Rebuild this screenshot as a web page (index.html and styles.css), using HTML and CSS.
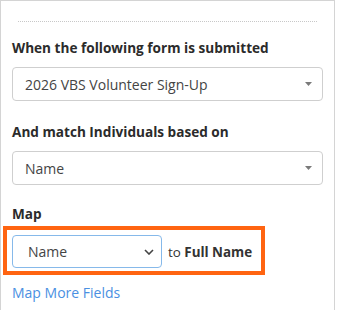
FILE: index.html
```html
<!DOCTYPE html>
<html>
<head>
    <title>Form Sync</title>
    <link rel="stylesheet" href="styles.css">
</head>
<body>
    <div class="panel">
        <hr class="divider">

        <div class="field-label first">When the following form is submitted</div>
        <div class="picker">
            <span>2026 VBS Volunteer Sign-Up</span>
            <svg class="caret" width="7" height="4" viewBox="0 0 7 4"><path d="M0 0h7L3.5 4z" fill="#7a7a7a"/></svg>
        </div>

        <div class="field-label">And match Individuals based on</div>
        <div class="picker">
            <span>Name</span>
            <svg class="caret" width="7" height="4" viewBox="0 0 7 4"><path d="M0 0h7L3.5 4z" fill="#7a7a7a"/></svg>
        </div>

        <div class="field-label map-label">Map</div>
        <div class="map-row">
            <div class="picker focused">
                <span>Name</span>
                <svg class="chevron" width="10" height="6" viewBox="0 0 10 6"><path d="M1 1l4 4 4-4" fill="none" stroke="#444" stroke-width="1.6"/></svg>
            </div>
            <div class="map-target">to <b>Full Name</b></div>
        </div>

        <a class="more-link" href="#">Map More Fields</a>
    </div>
</body>
</html>
```

FILE: styles.css
```css
body {
    margin: 0;
    font-family: "Open Sans", sans-serif;
    color: #2b2b2b;
    background: white;
}

.panel {
    width: 335px;
    height: 320px;
    border: 1px solid #d4d4d4;
    border-bottom: none;
    padding: 20px 11px 0 11px;
    box-sizing: border-box;
}

.divider {
    margin: 0 6px;
    border: none;
    border-top: 1px dotted #c8c8c8;
    height: 0;
}

.field-label {
    font-size: 13.6px;
    font-weight: 700;
    line-height: 20px;
    margin-top: 21px;
    margin-bottom: 9px;
}

.field-label.first {
    margin-top: 16px;
}

.map-label {
    margin-top: 19px;
    margin-bottom: 2px;
}

.picker {
    height: 34px;
    border: 1px solid #cfcfcf;
    border-radius: 4px;
    box-sizing: border-box;
    display: flex;
    align-items: center;
    justify-content: space-between;
    padding: 0 10px 0 12px;
    font-size: 14px;
    color: #444;
}

.picker.focused {
    flex: none;
    width: 150px;
    height: 33px;
    border-color: #86b9ea;
    padding: 0 7px 0 15px;
}

.map-row {
    margin-left: -9px;
    width: 262px;
    border: 4px solid #ff6411;
    padding: 5px 0 3px 5px;
    box-sizing: border-box;
    display: flex;
    align-items: center;
    gap: 6px;
}

.map-target {
    font-size: 13.4px;
    color: #333;
    white-space: nowrap;
}

.more-link {
    display: block;
    margin-top: 8px;
    font-size: 14px;
    color: #4a90e2;
    text-decoration: none;
}
```
